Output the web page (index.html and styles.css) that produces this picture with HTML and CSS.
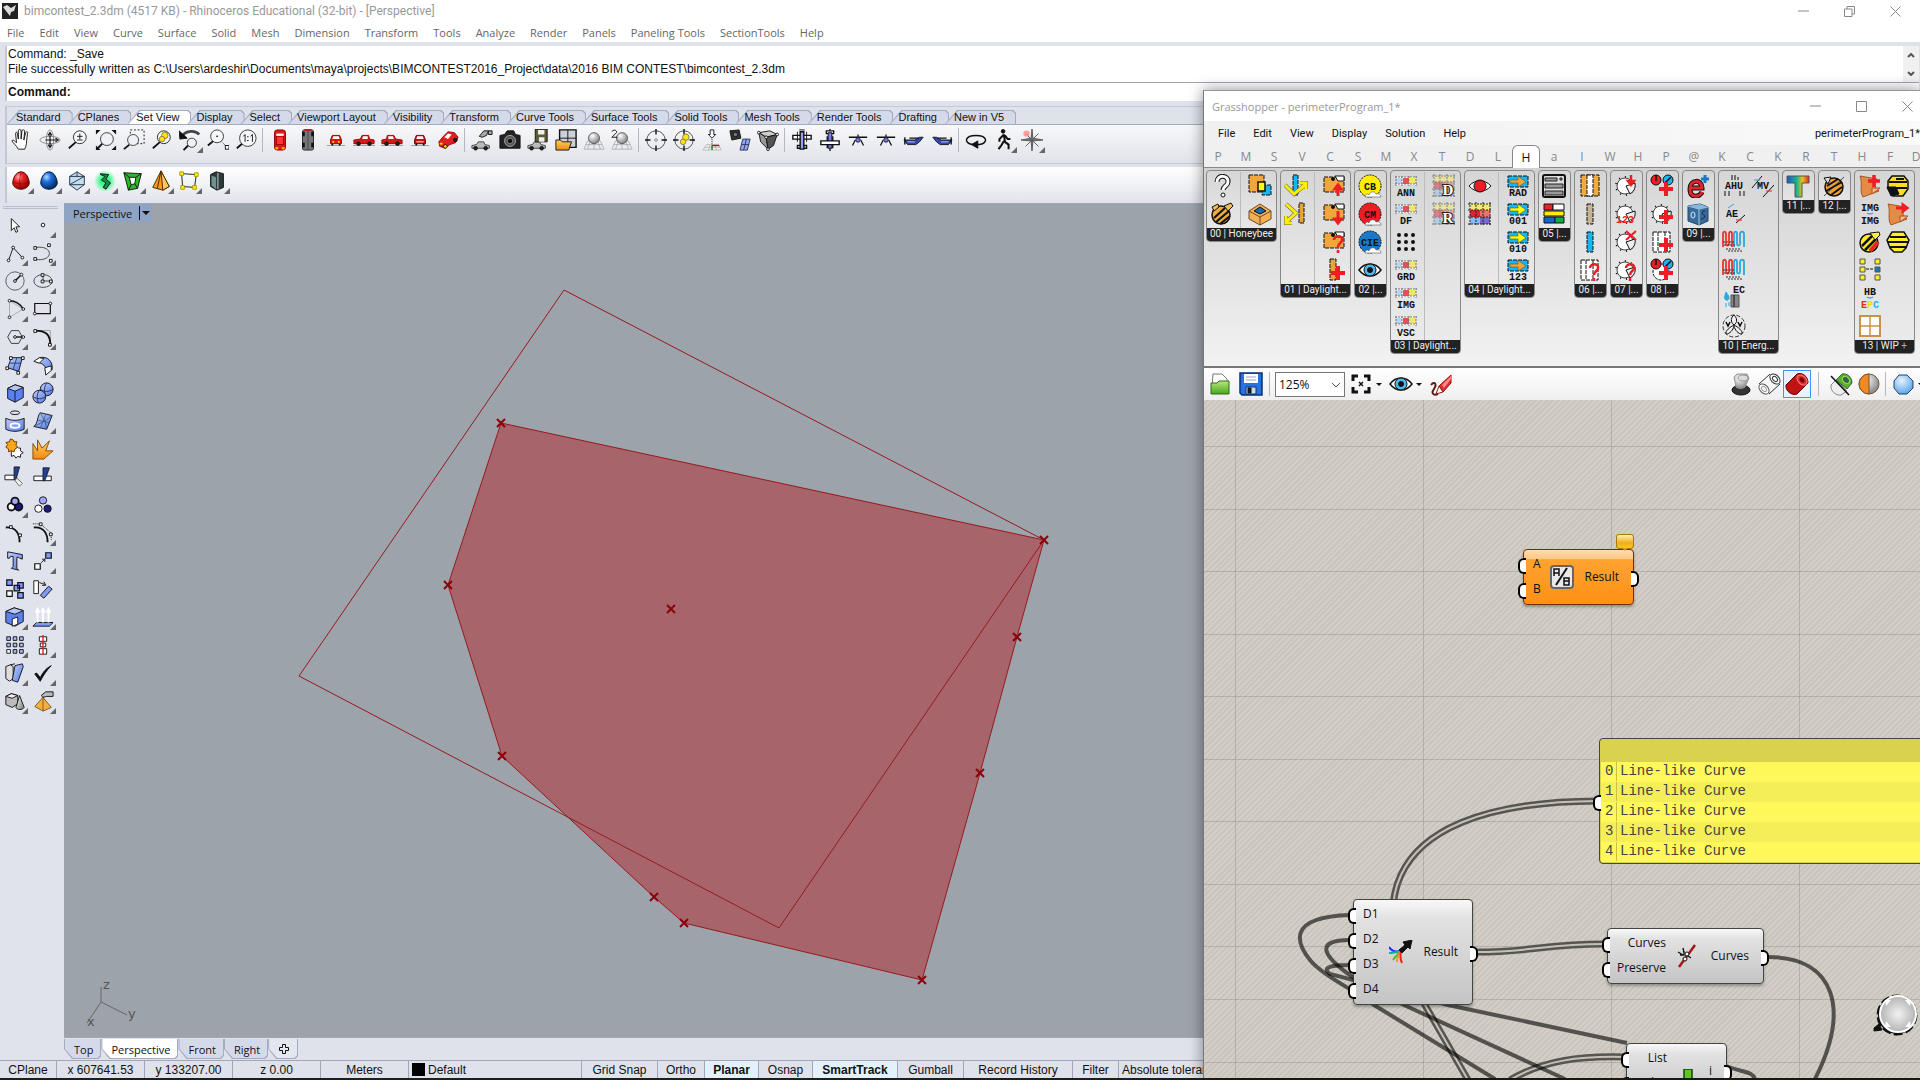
FILE: index.html
```html
<!DOCTYPE html>
<html lang="en">
<head>
<meta charset="UTF-8">
<meta name="viewport" content="width=device-width, initial-scale=1.0">
<title>bimcontest_2.3dm - Rhinoceros</title>
<link rel="stylesheet" href="styles.css">
</head>
<body>

<!-- icon library -->
<svg class="defs" aria-hidden="true">
<defs>
<linearGradient id="gBlue" x1="0" y1="0" x2="1" y2="1"><stop offset="0" stop-color="#c3d0ff"/><stop offset="1" stop-color="#5277ea"/></linearGradient>
<linearGradient id="gOrange" x1="0" y1="0" x2="0" y2="1"><stop offset="0" stop-color="#ffd060"/><stop offset="1" stop-color="#f08a10"/></linearGradient>
<linearGradient id="gGrey" x1="0" y1="0" x2="1" y2="1"><stop offset="0" stop-color="#fff"/><stop offset="1" stop-color="#777"/></linearGradient>
<linearGradient id="gGreen" x1="0" y1="0" x2="0" y2="1"><stop offset="0" stop-color="#b7e77d"/><stop offset="1" stop-color="#4aa51f"/></linearGradient>
<linearGradient id="gRain" x1="0" y1="0" x2="1" y2="0"><stop offset="0" stop-color="#1b56c8"/><stop offset=".45" stop-color="#19b58c"/><stop offset=".7" stop-color="#e8c21a"/><stop offset="1" stop-color="#e0281a"/></linearGradient>
<radialGradient id="bRed" cx=".35" cy=".3" r=".8"><stop offset="0" stop-color="#ffb0b0"/><stop offset=".35" stop-color="#ee2222"/><stop offset="1" stop-color="#700"/></radialGradient>
<radialGradient id="bBlue" cx=".35" cy=".3" r=".8"><stop offset="0" stop-color="#b0dcff"/><stop offset=".35" stop-color="#1f6fe0"/><stop offset="1" stop-color="#024"/></radialGradient>
<radialGradient id="bGrey" cx=".35" cy=".3" r=".8"><stop offset="0" stop-color="#fff"/><stop offset="1" stop-color="#777"/></radialGradient>
<radialGradient id="bSilver"><stop offset="0" stop-color="#f2f2f2"/><stop offset="1" stop-color="#b4b4b4"/></radialGradient>
<radialGradient id="bIce" cx=".4" cy=".3" r=".8"><stop offset="0" stop-color="#e6f4ff"/><stop offset="1" stop-color="#4a9be8"/></radialGradient>
<radialGradient id="glow"><stop offset=".4" stop-color="#3f8"/><stop offset="1" stop-color="#3f8" stop-opacity="0"/></radialGradient>

<symbol id="lens" viewBox="0 0 24 24"><path d="M10 14L2 21" stroke="#111" stroke-width="2"/><circle cx="14" cy="9" r="7" fill="#f6f7fa" stroke="#222"/></symbol>
<symbol id="hand" viewBox="0 0 24 24"><path d="M8 22C6 18 2 15 1 13c1-2 3 0 5 2L5 5c0-2 2-2 2 0l1 6V2c0-2 3-2 3 0v9l1-9c0-2 3-1 3 0l-1 10 2-8c1-2 3-1 2 1l-1 8c0 5-1 6-2 9z" fill="#fff"/></symbol>
<symbol id="orbit" viewBox="0 0 24 24"><ellipse cx="12" cy="12" rx="11" ry="4" stroke="#888"/><ellipse cx="12" cy="12" rx="4" ry="11" stroke="#888"/><path d="M12 6v12M7 12h12M10 7l2-3 2 3M10 17l2 3 2-3M18 10l3 2-3 2" stroke-width="1.3"/></symbol>
<symbol id="zoompm" viewBox="0 0 24 24"><use href="#lens"/><path d="M11 8h6M14 5v6M11 12h6"/></symbol>
<symbol id="zoomext" viewBox="0 0 24 24"><path d="M8 16l-5 5" stroke-width="2"/><circle cx="13" cy="11" r="7" fill="#eef1f5" stroke="#333"/><path d="M1 6V1h5zM23 6V1h-5zM1 18v5h5zM23 18v5h-5z" fill="#111" stroke="none"/></symbol>
<symbol id="zoomwin" viewBox="0 0 24 24"><path d="M8 1h15v15H8z" stroke-dasharray="2 2"/><path d="M7 17l-6 5" stroke-width="2"/><circle cx="11" cy="12" r="6" fill="#eef1f5" stroke="#444"/></symbol>
<symbol id="zoomsel" viewBox="0 0 24 24"><use href="#lens"/><circle cx="15" cy="7" r="3.500" fill="#ffe600" stroke="#875"/><circle cx="12" cy="11" r="3" fill="#ffe600" stroke="#875"/></symbol>
<symbol id="undoview" viewBox="0 0 24 24"><path d="M3 8C8 1 18 1 22 6" stroke="#444" stroke-width="3"/><path d="M0 2l1 9 8-1z" fill="#111"/><path d="M10 18l-5 5" stroke-width="2"/><circle cx="14" cy="15" r="5" fill="#eef1f5" stroke="#333"/></symbol>
<symbol id="zoomtgt" viewBox="0 0 24 24"><path d="M7 13l-6 5" stroke-width="2"/><circle cx="11" cy="8" r="7" fill="#f6f7fa" stroke="#333"/><circle cx="11" cy="8" r=".6"/><path d="M16 14l4 4" stroke-dasharray="1 1"/><rect x="20" y="18" width="4" height="4" fill="#fff"/></symbol>
<symbol id="zoom11" viewBox="0 0 24 24"><path d="M9 15l-7 6" stroke-width="2"/><circle cx="14" cy="10" r="9" fill="#f6f7fa" stroke="#333"/><path d="M9 8l2-2v8M17 8l2-2v8"/><path d="M14 8v1M14 12v1" stroke-width="1.500"/></symbol>
<symbol id="cartop" viewBox="0 0 24 24"><rect x="6" y="1" width="12" height="22" rx="3" fill="#e01818" stroke="#800"/><rect x="8" y="5" width="8" height="3" fill="#fff" stroke="none"/><rect x="8" y="8" width="8" height="9" fill="#f33" stroke="#900"/><path d="M7 21h3M14 21h3" stroke="#fc0" stroke-width="2"/></symbol>
<symbol id="carbot" viewBox="0 0 24 24"><rect x="6" y="1" width="12" height="22" rx="2" fill="#777" stroke="#222"/><path d="M12 2v20" stroke="#444"/><path d="M7 3v5M17 3v5M7 15v5M17 15v5" stroke="#111" stroke-width="3"/><path d="M8 1h8" stroke="#d11" stroke-width="2"/></symbol>
<symbol id="carfront" viewBox="0 0 24 24"><path d="M2 18h20" stroke="#999"/><path d="M8 7h8l2 5v4H6v-4z" fill="#d81818" stroke="#900"/><path d="M9 8h6l1 3H8z" fill="#fff" stroke="none"/><path d="M8 14h2M14 14h2" stroke="#fd0" stroke-width="2"/><path d="M7 17h2M15 17h2" stroke-width="2"/></symbol>
<symbol id="carleft" viewBox="0 0 24 24"><path d="M0 18h24" stroke="#999"/><path d="M1 12l7-1 2-4h7l1 4 5 1v4H1z" fill="#d81818" stroke="#900"/><path d="M11 8h5v3h-6z" fill="#fff" stroke="none"/><circle cx="6" cy="16" r="2" fill="#222"/><circle cx="18" cy="16" r="2" fill="#222"/></symbol>
<symbol id="carright" viewBox="0 0 24 24"><g transform="matrix(-1 0 0 1 24 0)"><use href="#carleft"/></g></symbol>
<symbol id="carback" viewBox="0 0 24 24"><path d="M2 18h20" stroke="#999"/><path d="M8 7h8l2 5v4H6v-4z" fill="#c81010" stroke="#700"/><path d="M9 8h6l1 3H8z" fill="#fff" stroke="none"/><path d="M8 14h8" stroke="#fff"/><path d="M7 17h2M15 17h2" stroke-width="2"/></symbol>
<symbol id="carpersp" viewBox="0 0 24 24"><path d="M2 14l5-6 5-5 7 1 4 5-3 6-6 2-5 4-6-2z" fill="#e02020" stroke="#900"/><path d="M8 9l4-4 4 1-4 5z" fill="#fff" stroke="none"/><circle cx="9" cy="19" r="2" fill="#fd0"/><circle cx="20" cy="12" r="2" fill="#222"/><path d="M3 16h3" stroke="#fd0" stroke-width="2"/></symbol>
<symbol id="cargrey" viewBox="0 0 24 24"><path d="M1 18l5-1 2-3h6l1 3 5 1v3H1z" fill="#bbb" stroke="#444"/><circle cx="5" cy="21" r="2" fill="#222"/><circle cx="16" cy="21" r="2" fill="#222"/></symbol>
<symbol id="carset" viewBox="0 0 24 24"><use href="#cargrey"/><path d="M9 8l5-6h5l-2 5-5 2zM19 2h4v4h-4z" fill="#aaa"/></symbol>
<symbol id="camera" viewBox="0 0 24 24"><path d="M1 7l5-1 3-4h7l2 4 5 1v14H1z" fill="#222"/><circle cx="12" cy="13" r="6" fill="#555" stroke="#aaa"/><circle cx="12" cy="13" r="3" fill="#111" stroke="#888"/></symbol>
<symbol id="carsave" viewBox="0 0 24 24"><use href="#cargrey"/><path d="M9 0h13v14H9z" fill="#5c5c38"/><path d="M12 1h7v5h-7zM13 9h6v5h-6z" fill="#eee" stroke="none"/></symbol>
<symbol id="openview" viewBox="0 0 24 24"><path d="M5 1h18v19H5z" fill="#ccd0da" stroke-width="1.500"/><path d="M14 1v14M5 10h18"/><path d="M1 12h5l2 2h10l-3 9H1z" fill="url(#gOrange)"/></symbol>
<symbol id="ball" viewBox="0 0 24 24"><path d="M5 13h14l4 9H1zM3 17h18M8 13l-3 9M16 13l3 9M12 13v9" stroke="#999" stroke-width=".7"/><circle cx="12" cy="10" r="6" fill="url(#bGrey)" stroke="#555"/></symbol>
<symbol id="ball2" viewBox="0 0 24 24"><use href="#ball"/><path d="M1 3c1-3 6-2 5 1L1 9h6"/></symbol>
<symbol id="target" viewBox="0 0 24 24"><circle cx="12" cy="12" r="10" stroke="#444"/><circle cx="12" cy="12" r="1.500" stroke="#888"/><path d="M12 0v6M12 18v6M0 12h6M18 12h6" stroke-width="1.500"/></symbol>
<symbol id="targety" viewBox="0 0 24 24"><use href="#target"/><circle cx="14" cy="9" r="3.500" fill="#ffe600" stroke="#875"/><circle cx="11" cy="14" r="3" fill="#ffe600" stroke="#875"/></symbol>
<symbol id="cplane" viewBox="0 0 24 24"><path d="M10 1h4v5h2l-4 4-4-4h2z" fill="#fff"/><path d="M12 11v8" stroke-dasharray="1 1"/><path d="M6 17h13l3 6H2zM4 20h17M10 17l-2 6M15 17l2 6" stroke="#aaa" stroke-width=".7"/><path d="M12 18h8" stroke="#d00" stroke-width="1.500"/><path d="M12 18v5" stroke="#080" stroke-width="1.500"/></symbol>
<symbol id="camplane" viewBox="0 0 24 24"><path d="M1 2l10-1 2 9-10 2z" fill="#333"/><circle cx="7" cy="6" r="2.500" fill="#777"/><path d="M15 11h8l-3 12h-8z" fill="#8ea8f8" stroke="#335"/><path d="M14 17h8M19 11l-3 12" stroke="#335"/></symbol>
<symbol id="boxedit" viewBox="0 0 24 24"><path d="M2 4l12-2 8 4-12 3z" fill="#ccc"/><path d="M2 4l8 5 2 13-8-8z" fill="#999"/><path d="M10 9l12-3-4 12-6 4z" fill="#555"/><g fill="#fff"><circle cx="2" cy="4" r="1.500"/><circle cx="10" cy="9" r="1.500"/><circle cx="22" cy="6" r="1.500"/><circle cx="12" cy="22" r="1.500"/></g></symbol>
<symbol id="planetop" viewBox="0 0 24 24"><path d="M2 7h20v4H2zM7 18h10v3H7z" fill="#fff" stroke-width="1.500"/><path d="M7 3v11M17 3v11M9 1h6"/><path d="M10 3h4v19h-4z" fill="#99f" stroke-width="1.500"/></symbol>
<symbol id="planebot" viewBox="0 0 24 24"><path d="M8 2h8v3H8z" fill="#fff" stroke-width="1.500"/><path d="M10 4h4v17h-4z" fill="#77e"/><path d="M2 13h20v4H2z" fill="#fff" stroke-width="1.500"/><path d="M12 0v2M9 8v5M15 8v5M9 17v4M15 17v4M12 21v3" stroke-width="1.500"/></symbol>
<symbol id="planefront" viewBox="0 0 24 24"><path d="M2 9h20M12 6v5M9 12l-3 6M15 12l3 6" stroke-width="1.400"/><circle cx="12" cy="12" r="2.500" fill="#77c" stroke="#225"/></symbol>
<symbol id="planeleft" viewBox="0 0 24 24"><path d="M1 12l4 5h9l4-3 4-5h-4l-5 3z" fill="#3446b0" stroke="#112"/><path d="M7 10h10M2 9v8" stroke-width="1.500"/><path d="M5 14h8" stroke="#cce"/></symbol>
<symbol id="planeright" viewBox="0 0 24 24"><g transform="matrix(-1 0 0 1 24 0)"><use href="#planeleft"/></g></symbol>
<symbol id="turn" viewBox="0 0 24 24"><path d="M8 17C-2 15 0 7 12 7s14 8 4 10h-4" stroke-width="1.600"/><path d="M14 13v8l-7-4z" fill="#111"/></symbol>
<symbol id="walk" viewBox="0 0 24 24"><circle cx="11" cy="2.500" r="2" fill="#111"/><path d="M12 6l-5 5v3M12 6l1 8 4 3v5M12 13l-3 5-3 4M13 7l3 4h3" stroke-width="2.200"/></symbol>
<symbol id="rose" viewBox="0 0 24 24"><path d="M12 0l1 10 11 2-11 1-1 11-1-11-11-1 11-2z" fill="#777" stroke="#555"/><path d="M5 5l14 14M19 5L5 19" stroke="#555"/><circle cx="6" cy="5" r="3.500" fill="#f88" fill-opacity=".8" stroke="none"/></symbol>

<symbol id="eggr" viewBox="0 0 24 24"><path d="M12 2c6 0 9 8 9 12s-4 7-9 7-9-3-9-7S6 2 12 2z" fill="url(#bRed)" stroke="#500"/><path d="M4 13c5 3 11 3 16 0M12 3c-2 6-2 12 0 18" stroke="#700" stroke-width=".6"/></symbol>
<symbol id="eggb" viewBox="0 0 24 24"><path d="M12 2c6 0 9 8 9 12s-4 7-9 7-9-3-9-7S6 2 12 2z" fill="url(#bBlue)" stroke="#013"/></symbol>
<symbol id="hexa" viewBox="0 0 24 24"><path d="M12 2l8 5v9l-8 6-8-6V7z" fill="#c6dcf0" stroke="#234"/><path d="M4 7h16L4 16h16M12 2v5" stroke="#234"/></symbol>
<symbol id="kang" viewBox="0 0 24 24"><circle cx="12" cy="12" r="12" fill="url(#glow)" stroke="none"/><path d="M7 4l9 1-3 5 5 4-5 7-3-2 3-5-5-3 4-4-5-2z" fill="#1a8a4a"/></symbol>
<symbol id="quadg" viewBox="0 0 24 24"><path d="M2 3l19 1-4 16-10 2z" fill="#2db52d"/><path d="M8 8h7l-1 7-4 1z" fill="#fff"/><path d="M2 3l6 5M21 4l-6 4M17 20l-3-5M7 22l3-6"/></symbol>
<symbol id="pyr" viewBox="0 0 24 24"><path d="M12 1l9 17-7 4-11-3z" fill="#f59a1b" stroke="#420"/><path d="M12 1L8 20" stroke="#420"/><path d="M12 1l2 21 7-4z" fill="#ffc860" stroke="#420"/></symbol>
<symbol id="quady" viewBox="0 0 24 24"><path d="M4 4l16 1-2 14-13-1z"/><g fill="#ffee00" stroke="#a90"><path d="M2 2h4v4H2zM18 3h4v4h-4zM16 17h4v4h-4zM3 17h4v4H3z"/></g></symbol>
<symbol id="prism" viewBox="0 0 24 24"><path d="M5 5l6-3 8 2v15l-7 3-7-4z" fill="#2a3a3a"/><path d="M6 6l5 2v13l-5-4z" fill="#6f9090" stroke="none"/><path d="M13 3v18" stroke="#cdd"/></symbol>

<symbol id="arrow" viewBox="0 0 24 24"><path d="M8 5v13l3-3 2 5 2-1-2-5h4z" fill="#fff"/></symbol>
<symbol id="point" viewBox="0 0 24 24"><circle cx="12" cy="12" r="2" fill="#fff"/></symbol>
<symbol id="pline" viewBox="0 0 24 24"><path d="M5 20L10 6l10 11"/><g fill="#fff"><circle cx="5" cy="20" r="1.500"/><circle cx="10" cy="6" r="1.500"/><circle cx="20" cy="17" r="1.500"/></g></symbol>
<symbol id="curve" viewBox="0 0 24 24"><path d="M4 6c20-3 20 16 0 13" stroke="#444"/><g fill="#fff"><path d="M2 5h3v3H2zM17 2h3v3h-3zM2 17h3v3H2zM19 19h3v3h-3z"/></g></symbol>
<symbol id="circle" viewBox="0 0 24 24"><circle cx="12" cy="12" r="10" stroke="#555"/><path d="M12 12l6-6" stroke-width="1.500"/><circle cx="12" cy="12" r="1.500" fill="#fff"/><circle cx="19" cy="5" r="1.500" fill="#fff"/></symbol>
<symbol id="ellipse" viewBox="0 0 24 24"><ellipse cx="12" cy="12" rx="10" ry="7" stroke="#444"/><path d="M12 12h9M12 12V5" stroke-width=".8"/><path d="M10 11h3v3h-3zM19 11h3v3h-3zM10 4h3v3h-3z" fill="#fff"/></symbol>
<symbol id="arc" viewBox="0 0 24 24"><path d="M6 21V3l15 9z" stroke="#aaa"/><path d="M6 3c7 0 12 4 15 9" stroke-width="1.500"/><g fill="#fff"><circle cx="6" cy="3" r="1.500"/><circle cx="6" cy="21" r="1.500"/><circle cx="21" cy="12" r="1.500"/></g></symbol>
<symbol id="rect" viewBox="0 0 24 24"><path d="M3 6h17v11H3z" stroke-width="1.300"/><g fill="#fff"><circle cx="3" cy="17" r="1.500"/><circle cx="20" cy="6" r="1.500"/></g></symbol>
<symbol id="poly" viewBox="0 0 24 24"><path d="M8 5h8l4 7-4 7H8l-4-7z" stroke="#333"/><path d="M12 12h8" stroke-width="1.500"/><circle cx="12" cy="12" r="1.500" fill="#fff"/><circle cx="21" cy="12" r="1.500" fill="#fff"/></symbol>
<symbol id="fillet" viewBox="0 0 24 24"><path d="M3 5h17v16" stroke="#999"/><path d="M3 5c12 0 17 4 17 16" stroke-width="2"/><path d="M2 4h3v3H2zM18 19h3v3h-3z" fill="#fff"/></symbol>
<symbol id="srf" viewBox="0 0 24 24"><path d="M8 4h12l-4 15-12-4z" fill="url(#gBlue)"/><path d="M14 4l-4 13M6 10h12" stroke="#246"/><path d="M6 3h3v3H6zM19 3h3v3h-3zM2 14h3v3H2zM14 19h3v3h-3z" fill="#fff"/></symbol>
<symbol id="loft" viewBox="0 0 24 24"><path d="M8 4c9-2 15 4 14 13l-7 3c1-7-3-10-10-11z" fill="url(#gBlue)"/><path d="M2 8l6-4 5 1-5 5zM14 15l7-2v5l-6 5z" fill="#fff"/></symbol>
<symbol id="cube" viewBox="0 0 24 24"><path d="M4 7l8-4 9 3v11l-9 5-8-4z" fill="#5b80f2"/><path d="M4 7l8-4 9 3-9 4z" fill="#b4c5ff"/><path d="M12 10v12"/></symbol>
<symbol id="spheres" viewBox="0 0 24 24"><circle cx="16" cy="8" r="7" fill="url(#gBlue)"/><circle cx="8" cy="16" r="7" fill="url(#gBlue)"/><path d="M16 1c-3 5-3 9-1 13M9 8c5 3 9 3 14 0M8 9c-3 5-3 9-1 14M1 16c5 3 9 3 14 0" stroke="#234"/></symbol>
<symbol id="extr" viewBox="0 0 24 24"><ellipse cx="12" cy="3" rx="5" ry="2"/><path d="M2 9c6 3 14 3 20 0v12c-6 3-14 3-20 0z" fill="url(#gBlue)"/><ellipse cx="12" cy="17" rx="5" ry="2.500" stroke="#fff" stroke-width="2"/></symbol>
<symbol id="mesh" viewBox="0 0 24 24"><path d="M9 3l13 3-6 15-14-3c5-4 3-10 7-15z" fill="url(#gBlue)"/><path d="M6 11l13 3M15 5L9 20M9 3l5 9M2 18l12-6M22 6l-8 6 2 9" stroke="#357" stroke-width=".8"/></symbol>
<symbol id="puzzle" viewBox="0 0 24 24"><path d="M10 11l3-2 3 2 2 0 0 3 3 2-3 2 0 3-3-1-2 2-2-3-3 1 0-4z" fill="#fff"/><path d="M2 5l4-1 1-3 3 1 1 2 3 0-1 4 2 2-3 2-1 3-3-1-3 1 0-3-3-2 2-3z" fill="#f9a61a" stroke="#630"/></symbol>
<symbol id="explode" viewBox="0 0 24 24"><path d="M1 23V6l5 8 0-12 5 9L19 3l-4 11 8 0-10 9z" fill="url(#gOrange)" stroke="#840"/></symbol>
<symbol id="trim" viewBox="0 0 24 24"><path d="M1 10h12v5H1z" fill="#fff"/><path d="M11 1h6l-4 14h-2z" fill="#24418f" stroke="#123"/><path d="M14 13l6 6-3 3-5-6z" fill="#eee" stroke="#666"/></symbol>
<symbol id="split" viewBox="0 0 24 24"><path d="M2 11h19v5H2z" fill="#fff"/><path d="M12 2h7l-5 14h-2z" fill="#24418f" stroke="#123"/></symbol>
<symbol id="group" viewBox="0 0 24 24"><g stroke-width="2"><circle cx="8" cy="14" r="4" fill="#fff"/><circle cx="16" cy="14" r="4" fill="#1b1b80"/><circle cx="12" cy="8" r="4" fill="#a0a8ff"/></g></symbol>
<symbol id="ungroup" viewBox="0 0 24 24"><circle cx="7" cy="16" r="4" fill="#fff"/><circle cx="17" cy="16" r="4" fill="#1b1b80"/><circle cx="12" cy="7" r="4" fill="#a0a8ff"/></symbol>
<symbol id="cpedit" viewBox="0 0 24 24"><path d="M2 6c12-1 15 8 15 16" stroke-width="2"/><path d="M6 4h3v3H6zM16 13h3v3h-3z" fill="#fff"/></symbol>
<symbol id="cpon" viewBox="0 0 24 24"><path d="M2 6c12-1 15 8 15 16" stroke-width="2"/><path d="M1 2h8l12 10v8" stroke-dasharray="1 1"/><path d="M8 1h3v3H8zM19 12h3v3h-3z" fill="#fff"/></symbol>
<symbol id="text" viewBox="0 0 24 24"><path d="M4 2l16 3v5l-3-1-1-1-2 0 0 12 2 2-8-2 2-2V7H7L6 9H4z" fill="url(#gBlue)"/></symbol>
<symbol id="move" viewBox="0 0 24 24"><path d="M3 15h6v6H3z" fill="#fff" stroke-width="1.300"/><path d="M15 3h6v6h-6z" fill="#7d9bff" stroke-width="1.300"/><path d="M10 14l4-4m-3 0h3v3"/></symbol>
<symbol id="copy" viewBox="0 0 24 24"><g fill="#7d9bff" stroke-width="1.300"><path d="M3 2h6v6H3zM15 5h6v6h-6zM11 8h6v6h-6zM15 16h6v6h-6z"/><path d="M3 14h6v6H3z" fill="#fff"/></g></symbol>
<symbol id="rotate" viewBox="0 0 24 24"><path d="M2 3h5v14H2z" fill="#fff"/><path d="M9 19l9-10 4 3-9 10z" fill="#7d9bff"/><path d="M8 5l6 2m-1-3l2 4-4 0"/></symbol>
<symbol id="boolean" viewBox="0 0 24 24"><path d="M2 6l9-4 10 3v12l-9 5-10-4z" fill="#5b80f2"/><path d="M2 6l9-4 10 3-9 4z" fill="#b4c5ff"/><path d="M9 14l6-2v8l-6 2z" fill="#fff"/></symbol>
<symbol id="project" viewBox="0 0 24 24"><path d="M5 18h18l-4 4H1z" fill="#7d9bff"/><path d="M6 18V5M12 18V5M18 18V5M4 7l2-4 2 4M10 7l2-4 2 4M16 7l2-4 2 4" stroke="#fff" stroke-width="2"/></symbol>
<symbol id="array" viewBox="0 0 24 24"><g fill="#a8b8ff"><path d="M3 3h4v4H3zM10 3h4v4h-4zM17 3h4v4h-4zM3 10h4v4H3zM10 10h4v4h-4zM17 10h4v4h-4zM10 17h4v4h-4zM17 17h4v4h-4z"/><path d="M3 17h4v4H3z" fill="#fff"/></g></symbol>
<symbol id="align" viewBox="0 0 24 24"><path d="M8 3h8v5H8zM9 10h6v4H9zM8 16h8v6H8z" fill="#fff"/><path d="M12 1v22" stroke="#d22" stroke-width="1.500"/></symbol>
<symbol id="flow" viewBox="0 0 24 24"><path d="M2 5l5-2 3 2v13l-4 3-4-3z" fill="#ddd"/><path d="M12 4l8-2 1 3-6 17-6-2z" fill="url(#gBlue)"/><path d="M7 3l5-1"/></symbol>
<symbol id="check" viewBox="0 0 24 24"><path d="M3 13l2-1 4 5C12 11 15 7 21 4 16 9 12 15 9 21z" fill="#111"/></symbol>
<symbol id="solids" viewBox="0 0 24 24"><path d="M2 7l6-3 7 2v9l-6 4-7-3z" fill="#bbb"/><path d="M2 7l6-3 7 2-6 3z" fill="#eee"/><path d="M17 6l5 13c-2 3-8 3-9 0z" fill="url(#gGrey)"/></symbol>
<symbol id="hist" viewBox="0 0 24 24"><path d="M12 8l9 11-9 4-9-5z" fill="#f5b042" stroke="#752"/><path d="M12 8v15" stroke="#752"/><path d="M10 6l5-4h8v5h-7l-4 1z" fill="#bbb"/></symbol>

<symbol id="quest" viewBox="0 0 24 24"><path d="M7 8C7 0 19 1 18 8c0 4-5 4-5 8" stroke="#111" stroke-width="5"/><path d="M7 8C7 0 19 1 18 8c0 4-5 4-5 8" stroke="#fff" stroke-width="3"/><circle cx="13" cy="21" r="2" fill="#fff"/></symbol>
<symbol id="bee" viewBox="0 0 24 24"><ellipse cx="11" cy="13" rx="9" ry="9" fill="#f0ab40" stroke-width="1.500"/><path d="M4 16L15 6M6 20L19 9M10 22L20 14" stroke-width="2.200"/><path d="M14 4l7-3 2 3-5 5zM2 5l6-3 1 3-5 4z" fill="#f3bb58"/></symbol>
<symbol id="zones" viewBox="0 0 24 24"><path d="M1 1h15v17H1z" fill="#f1a63c" stroke-dasharray="4 1"/><path d="M14 11h9v10h-9z" fill="#19b5f1" stroke-dasharray="4 1"/><path d="M10 8h7v9h-7z" fill="#ff0" stroke-width="1.500"/></symbol>
<symbol id="crate" viewBox="0 0 24 24"><path d="M1 9l11-7 11 7v8l-11 6-11-6z" fill="#f1b055" stroke="#742"/><path d="M1 9l11 6 11-6M12 15v8" stroke="#742"/><path d="M6 9l6-4 6 4-6 3z" fill="#1a6ab5"/></symbol>
<symbol id="pick1" viewBox="0 0 24 24"><path d="M9 1h5v20H9z" fill="#19b5f1" stroke-dasharray="4 1"/><path d="M1 11l9 9 11-9M16 9h6v6" stroke="#665" stroke-width="4"/><path d="M1 11l9 9 11-9M16 9h6v6" stroke="#fe0" stroke-width="3"/></symbol>
<symbol id="pick2" viewBox="0 0 24 24"><path d="M15 1h5v20h-5z" fill="#e8a33a" stroke-dasharray="4 1"/><path d="M2 2l10 9-10 9M2 14v7h6" stroke="#665" stroke-width="4"/><path d="M2 2l10 9-10 9M2 14v7h6" stroke="#fe0" stroke-width="3"/></symbol>
<symbol id="tag" viewBox="0 0 24 24"><path d="M2 3h20v15H2z" fill="#f1a63c" stroke-dasharray="4 1"/><path d="M13 2h9v5h-6z" fill="#fff"/><circle cx="11" cy="5" r="1.500" fill="#111"/></symbol>
<symbol id="tagup" viewBox="0 0 24 24"><use href="#tag"/><path d="M16 22v-9M13 15l3-4 3 4z" stroke="#ee1c24" stroke-width="3" fill="#ee1c24"/></symbol>
<symbol id="tagdn" viewBox="0 0 24 24"><use href="#tag"/><path d="M16 9v9M13 17l3 4 3-4z" stroke="#ee1c24" stroke-width="3" fill="#ee1c24"/></symbol>
<symbol id="redq" viewBox="0 0 24 24"><path d="M12 10c0-5 9-5 8 0 0 3-4 3-4 7M16 20v3" stroke="#ee1c24" stroke-width="2.500"/></symbol>
<symbol id="tagq" viewBox="0 0 24 24"><use href="#tag"/><use href="#redq"/></symbol>
<symbol id="redplus" viewBox="0 0 24 24"><path d="M16 8v14M9 15h14" stroke="#ee1c24" stroke-width="4"/></symbol>
<symbol id="postplus" viewBox="0 0 24 24"><path d="M8 1h6v21H8z" fill="#e8a33a" stroke-dasharray="4 1"/><use href="#redplus"/></symbol>
<symbol id="cloud" viewBox="0 0 24 24"><path d="M7 23c0-3 3-4 4-2 1-4 6-4 7-1 3-1 5 1 5 3z" fill="#fff" stroke="#555" stroke-width=".6"/></symbol>
<symbol id="eye" viewBox="0 0 24 24"><path d="M1 12c6-8 16-8 22 0-6 8-16 8-22 0z" fill="#fff" stroke-width="1.500"/><circle cx="12" cy="12" r="6" fill="#4db8f0"/><circle cx="12" cy="12" r="2.500" fill="#111"/></symbol>
<symbol id="redeye" viewBox="0 0 24 24"><path d="M1 12c6-7 16-7 22 0-6 7-16 7-22 0z" fill="#fff"/><circle cx="12" cy="12" r="6" fill="#ee1c24"/></symbol>
<symbol id="strip" viewBox="0 0 24 24"><path d="M2 3h20v8H2z" fill="#fff" stroke="none"/><path d="M2 4h6v6H2z" fill="#b8d4f0" stroke="none"/><path d="M9 4h6v6H9z" fill="#e34f5a" stroke="none"/><path d="M16 4h6v6h-6z" fill="#f2e66a" stroke="none"/><path d="M1 3h22M1 10h22M2 2v10M8 2v10M15 2v10M22 2v10" stroke="#777" stroke-dasharray="2 1"/></symbol>
<symbol id="dots" viewBox="0 0 24 24"><path d="M5 5h0M12 5h0M19 5h0M5 12h0M12 12h0M19 12h0M5 19h0M12 19h0M19 19h0" stroke-width="4" stroke-linecap="round"/></symbol>
<symbol id="grid" viewBox="0 0 24 24"><path d="M2 2h20v6H2z" fill="#f2ea6a" stroke="none"/><path d="M2 8h10v7H2z" fill="#e02030" stroke="none"/><path d="M12 8h10v7H12z" fill="#f07068" stroke="none"/><path d="M2 15h10v7H2z" fill="#8ab8f0" stroke="none"/><path d="M12 15h10v7H12z" fill="#7868c8" stroke="none"/><path d="M0 2h24M0 8h24M0 15h24M0 22h24M2 0v24M8 0v24M15 0v24M22 0v24" stroke="#222" stroke-dasharray="2 1"/></symbol>
<symbol id="flag" viewBox="0 0 24 24"><path d="M2 2h20v11H2z" fill="#19b5f1" stroke-dasharray="4 1"/></symbol>
<symbol id="flagy" viewBox="0 0 24 24"><use href="#flag"/><path d="M4 6h8V2l8 6-8 5V9H4z" fill="#ff0" stroke="#554" stroke-width=".6"/></symbol>
<symbol id="flago" viewBox="0 0 24 24"><use href="#flag"/><path d="M4 6h8V2l8 6-8 5V9H4z" fill="#f1a63c" stroke="#554" stroke-width=".6"/></symbol>
<symbol id="sched" viewBox="0 0 24 24"><rect x="1" y="1" width="22" height="22" rx="2" fill="#ddd" stroke-width="2"/><path d="M3 4h12v3H3zM3 10h18v4H3zM3 17h18v4H3z" fill="#999" stroke="#222"/><path d="M17 5h4M19 3v4"/></symbol>
<symbol id="cards" viewBox="0 0 24 24"><path d="M2 2h9v6H2z" fill="#e22"/><path d="M11 2h11v6H11z" fill="#fff"/><path d="M2 9h20v5H2z" fill="#fe0"/><path d="M2 15h11v6H2z" fill="#16c"/><path d="M13 15h9v6h-9z" fill="#1a4"/></symbol>
<symbol id="wall3" viewBox="0 0 24 24"><path d="M3 1h18v21H3z" fill="#f0ab40" stroke-dasharray="4 1"/><path d="M9 1h6v21H9z" fill="#fff" stroke-dasharray="4 1"/></symbol>
<symbol id="wall1" viewBox="0 0 24 24"><path d="M9 2h6v20H9z" fill="#c8b294" stroke-dasharray="4 1"/></symbol>
<symbol id="wallb" viewBox="0 0 24 24"><path d="M9 2h6v20H9z" fill="#19b5f1" stroke-dasharray="4 1"/></symbol>
<symbol id="wallw" viewBox="0 0 24 24"><path d="M3 2h17v20H3zM8 2v20M15 2v20" fill="#fff" stroke-dasharray="4 1"/></symbol>
<symbol id="wallq" viewBox="0 0 24 24"><use href="#wallw"/><use href="#redq"/></symbol>
<symbol id="wallp" viewBox="0 0 24 24"><use href="#wallw"/><use href="#redplus"/></symbol>
<symbol id="dial" viewBox="0 0 24 24"><circle cx="11" cy="12" r="9" stroke-width="2" stroke-dasharray="1 5"/><circle cx="11" cy="12" r="8" fill="#fff" stroke="#444"/><path d="M12 12l9-3c1 6-2 9-5 11z" fill="#eee"/></symbol>
<symbol id="dialdn" viewBox="0 0 24 24"><use href="#dial"/><path d="M17 1v7M14 7l3 4 3-4z" stroke="#ee1c24" stroke-width="2.500" fill="#ee1c24"/></symbol>
<symbol id="dialx" viewBox="0 0 24 24"><use href="#dial"/><path d="M12 1l10 9M22 1L12 10" stroke="#ee1c24" stroke-width="2"/></symbol>
<symbol id="dialq" viewBox="0 0 24 24"><use href="#dial"/><use href="#redq"/></symbol>
<symbol id="dialp" viewBox="0 0 24 24"><use href="#dial"/><use href="#redplus"/></symbol>
<symbol id="knobs" viewBox="0 0 24 24"><circle cx="6" cy="6" r="5" fill="#ee1c24"/><circle cx="18" cy="6" r="5" fill="#19b5f1"/><path d="M6 1v6M15 9l6-6" stroke-width="1.500"/><use href="#redplus"/></symbol>
<symbol id="knobd" viewBox="0 0 24 24"><circle cx="11" cy="14" r="8" fill="#fff" stroke-dasharray="3 1"/><use href="#knobs"/></symbol>
<symbol id="eplus" viewBox="0 0 24 24"><path d="M4 14h12c0-9-12-9-12 1s10 8 12 3" stroke="#111" stroke-width="5"/><path d="M4 14h12c0-9-12-9-12 1s10 8 12 3" stroke="#e8222a" stroke-width="3"/><path d="M19 1v8M15 5h8" stroke="#1a78c8" stroke-width="3"/></symbol>
<symbol id="openst" viewBox="0 0 24 24"><path d="M2 4l12-2 8 3v14l-9 4-11-4z" fill="#3a6a9a" stroke="#246"/><path d="M2 4l11 3v16M13 7l9-2" stroke="#9cd"/><path d="M2 4l12-2 8 3-9 2z" fill="#8ab8d8" stroke="none"/><ellipse cx="7" cy="13" rx="2" ry="3" stroke="#cef"/><path d="M19 9c-5 0-2 4-1 4 2 1 0 4-3 4" stroke="#124"/></symbol>
<symbol id="coil" viewBox="0 0 24 24"><path d="M1 17V4c0-3 3-3 3 0v10c0 2 3 2 3 0V4c0-3 3-3 3 0v13" stroke="#e33" stroke-width="1.800"/><path d="M12 17V4c0-3 3-3 3 0v10c0 2 3 2 3 0V4c0-3 4-3 4 0v13" stroke="#2aa8e0" stroke-width="1.800"/><path d="M1 12h12M2 15h11M4 19h14M6 21h15" stroke="#333" stroke-dasharray="2 1"/></symbol>
<symbol id="cooler" viewBox="0 0 24 24"><path d="M4 6c3 4 4 6 2 8-4 1-4-3-2-8zM4 17v4M7 16v4" fill="#2aa8e0" stroke="#2aa8e0"/><path d="M9 9h8v12H9z" fill="#888" stroke="#555"/><path d="M12 9v12"/></symbol>
<symbol id="fan" viewBox="0 0 24 24"><circle cx="12" cy="12" r="11" stroke="#333" stroke-dasharray="4 2"/><path d="M12 11C8 8 9 3 12 1c3 3 4 7 0 10 4 2 9 6 8 9-4 0-7-4-8-8-1 4-4 8-8 8-1-3 4-7 8-9z" fill="#eee"/><path d="M4 8l2 4 2-4M16 8l2 4 2-4" stroke-width="1.500"/></symbol>
<symbol id="therm" viewBox="0 0 24 24"><path d="M1 2h22v7h-7v14H9V9H1z" fill="url(#gRain)" stroke="#555"/></symbol>
<symbol id="bee2" viewBox="0 0 24 24"><circle cx="12" cy="13" r="9" fill="#f0a030" stroke-width="1.500"/><path d="M5 12l11-7M4 17L20 8M9 21l11-8" stroke-width="2"/><path d="M2 4l7-1-3 7z" fill="#ddd"/><path d="M22 3L2 22" stroke-width=".7"/></symbol>
<symbol id="scroll" viewBox="0 0 24 24"><path d="M2 2l17 3c-3 4-3 8 2 12l-16 6C1 17 5 9 2 2z" fill="#e38c46" stroke="#a52"/><path d="M14 14h8l-8 6z" fill="#f4bb88" stroke="#a52"/></symbol>
<symbol id="scrollp" viewBox="0 0 24 24"><use href="#scroll"/><path d="M16 1v12M10 7h12" stroke="#ee1c24" stroke-width="3.500"/></symbol>
<symbol id="scrolla" viewBox="0 0 24 24"><use href="#scroll"/><path d="M10 6h8M17 3l4 3-4 3z" stroke="#ee1c24" stroke-width="3" fill="#ee1c24"/></symbol>
<symbol id="hiveb" viewBox="0 0 24 24"><path d="M6 2h12l4 5v8l-5 7H7l-5-7V7z" fill="#fd2" stroke-width="1.500"/><path d="M3 8h18M3 14h18M10 5h8" stroke-width="2"/><path d="M1 13l9 0 3 7-8 2z" fill="#111"/></symbol>
<symbol id="hive" viewBox="0 0 24 24"><path d="M6 2h12l5 8-3 8-4 4H8l-4-4-3-8z" fill="#fe2" stroke-width="1.500"/><path d="M4 7h16M1 12h22M4 17h16" stroke-width="2"/></symbol>
<symbol id="beey" viewBox="0 0 24 24"><ellipse cx="11" cy="13" rx="9" ry="9" fill="#fe2" stroke-width="1.500"/><path d="M12 21L20 12" stroke="#e22" stroke-width="4"/><path d="M4 16L14 6M7 20L18 9" stroke-width="2.500"/><path d="M12 3l9-1 1 3-5 5z" fill="#fe4"/></symbol>
<symbol id="nodes" viewBox="0 0 24 24"><g fill="#fe2" stroke="#554"><path d="M2 1h5v5H2zM17 1h5v5h-5zM2 9h5v5H2zM2 17h5v5H2zM17 17h5v5h-5z"/><path d="M17 9h5v5h-5z" fill="#17c"/></g><path d="M8 11h8" stroke-dasharray="3 1"/></symbol>
<symbol id="window" viewBox="0 0 24 24"><path d="M2 2h20v20H2z" fill="#fff" stroke="#c8924a" stroke-width="2"/><path d="M12 2v20M2 12h20" stroke="#c8924a" stroke-width="1.500"/></symbol>

<symbol id="open" viewBox="0 0 24 24"><path d="M5 2h9l5 5v8H4z" fill="#fff" stroke="#777"/><path d="M3 11h6l2-2h10v13H3z" fill="url(#gGreen)" stroke="#2e6d12"/></symbol>
<symbol id="save" viewBox="0 0 24 24"><path d="M1 1h22v22H3l-2-2z" fill="#2872e0" stroke="#0b2f73" stroke-width="1.500"/><path d="M5 2h14v9H5z" fill="#fff" stroke="none"/><path d="M7 5h10M7 8h10" stroke="#9ab"/><path d="M7 15h10v7H7z" fill="#cdd" stroke="#0b2f73"/><path d="M9 16h3v5H9z" fill="#123"/></symbol>
<symbol id="focus" viewBox="0 0 24 24"><path d="M4 9V4h5M15 4h5v5M20 15v5h-5M9 20H4v-5" stroke-width="3"/><path d="M10 10l4 4M14 10l-4 4" stroke-width="1.500"/></symbol>
<symbol id="pencil" viewBox="0 0 24 24"><path d="M2 13c4-5 6 0 3 4s-1 7 4 5" stroke="#5a1c10" stroke-width="2"/><path d="M10 14L22 3v8l-8 9z" fill="#e0302a" stroke="#911"/><path d="M7 22l3-8 4 6z" fill="#fff" stroke="#911"/><path d="M13 13l9-9v3l-7 9z" fill="#f88" stroke="none"/></symbol>
<symbol id="cylhide" viewBox="0 0 24 24"><ellipse cx="12" cy="18" rx="9" ry="5" fill="#333"/><path d="M5 5l3-3 10 0 2 4-4 9c-3 2-6 2-9 0z" fill="url(#bGrey)" stroke="#999"/><ellipse cx="14" cy="6" rx="5" ry="3" fill="#ddd" stroke="#999"/></symbol>
<symbol id="cylwire" viewBox="0 0 24 24"><path d="M2 12L13 2M12 22L23 12" stroke="#333"/><ellipse cx="18" cy="7" rx="4" ry="6" transform="rotate(-45 18 7)" fill="#fff" stroke="#333"/><ellipse cx="18" cy="7" rx="2" ry="3" transform="rotate(-45 18 7)" stroke="#333"/><ellipse cx="7" cy="17" rx="4" ry="6" transform="rotate(-45 7 17)" fill="#fff" stroke="#555"/><ellipse cx="7" cy="17" rx="2" ry="3" transform="rotate(-45 7 17)" stroke="#999"/></symbol>
<symbol id="cylred" viewBox="0 0 24 24"><path d="M1 13L12 2c5-2 11 2 11 9L12 22C7 24 0 19 1 13z" fill="#c01414" stroke="#600"/><ellipse cx="17" cy="8" rx="4" ry="6" transform="rotate(-45 17 8)" fill="#e03030" stroke="#f77"/><ellipse cx="17" cy="8" rx="2" ry="3" transform="rotate(-45 17 8)" fill="#700" stroke="none"/></symbol>
<symbol id="cylgreen" viewBox="0 0 24 24"><path d="M2 13l5-5 11 11-6 4C7 24 1 19 2 13z" fill="#eee" stroke="#888"/><path d="M7 8l6-6c5-1 10 3 10 9l-5 6z" fill="#5cae22" stroke="#364"/><ellipse cx="17" cy="8" rx="3" ry="4" transform="rotate(-45 17 8)" fill="#364" stroke="#9d6"/><path d="M2 4l18 19" stroke-width="1.500"/></symbol>
<symbol id="halfball" viewBox="0 0 24 24"><circle cx="12" cy="12" r="10" fill="url(#bGrey)" stroke="#753"/><path d="M12 2a10 10 0 0 0 0 20z" fill="#f08a20" stroke="#753"/></symbol>
<symbol id="iceball" viewBox="0 0 24 24"><path d="M8 3h8l6 6v7l-6 6H8l-5-6V9z" fill="url(#bIce)" stroke="#246"/></symbol>
<symbol id="mark" viewBox="0 0 10 10" width="10" height="10"><path d="M1 1l8 8M9 1L1 9"/></symbol>
</defs>
</svg>

<div class="rhino">
    <header class="titlebar">
        <svg class="applogo" viewBox="0 0 16 16"><rect width="16" height="16" fill="#222" stroke="none"/><path d="M1 4l4-2 4 3 5-3-2 6-3 1-1 4-4-5z" fill="#ddd" stroke="none"/></svg>
        <span>bimcontest_2.3dm (4517 KB) - Rhinoceros Educational (32-bit) - [Perspective]</span>
        <div class="winbtns">
            <button aria-label="Minimize"><svg viewBox="0 0 11 11"><path d="M0 5h11"/></svg></button>
            <button aria-label="Restore"><svg viewBox="0 0 11 11"><path d="M.5 3h7.500v7.500H.5zM3 3V.5h7.500V8H8"/></svg></button>
            <button aria-label="Close"><svg viewBox="0 0 11 11"><path d="M.5.5l10 10M10.500.5l-10 10"/></svg></button>
        </div>
    </header>
    <nav class="menu">
        <a href="#">File</a><a href="#">Edit</a><a href="#">View</a><a href="#">Curve</a><a href="#">Surface</a><a href="#">Solid</a><a href="#">Mesh</a><a href="#">Dimension</a><a href="#">Transform</a><a href="#">Tools</a><a href="#">Analyze</a><a href="#">Render</a><a href="#">Panels</a><a href="#">Paneling Tools</a><a href="#">SectionTools</a><a href="#">Help</a>
    </nav>

    <section class="command">
        <div class="history">
            <p>Command: _Save<br>File successfully written as C:\Users\ardeshir\Documents\maya\projects\BIMCONTEST2016_Project\data\2016 BIM CONTEST\bimcontest_2.3dm</p>
            <div class="scroller">
                <svg viewBox="0 0 8 5"><path d="M1 4l3-3 3 3"/></svg>
                <svg viewBox="0 0 8 5"><path d="M1 1l3 3 3-3"/></svg>
            </div>
        </div>
        <div class="prompt"><label for="cmd">Command:</label><input id="cmd" type="text"></div>
    </section>

    <section class="toolpane">
        <div class="tabs">
            <button>Standard</button><button>CPlanes</button><button class="active">Set View</button><button>Display</button><button>Select</button><button>Viewport Layout</button><button>Visibility</button><button>Transform</button><button>Curve Tools</button><button>Surface Tools</button><button>Solid Tools</button><button>Mesh Tools</button><button>Render Tools</button><button>Drafting</button><button>New in V5</button>
        </div>
        <div class="toolbar">
            <button class="tool" aria-label="Pan"><svg><use href="#hand"/></svg></button>
            <button class="tool" aria-label="Rotate view"><svg><use href="#orbit"/></svg></button>
            <button class="tool" aria-label="Zoom dynamic"><svg><use href="#zoompm"/></svg></button>
            <button class="tool" aria-label="Zoom extents"><svg><use href="#zoomext"/></svg></button>
            <button class="tool" aria-label="Zoom window"><svg><use href="#zoomwin"/></svg></button>
            <button class="tool" aria-label="Zoom selected"><svg><use href="#zoomsel"/></svg></button>
            <button class="tool fly" aria-label="Undo view"><svg><use href="#undoview"/></svg></button>
            <button class="tool" aria-label="Zoom target"><svg><use href="#zoomtgt"/></svg></button>
            <button class="tool" aria-label="Zoom 1:1"><svg><use href="#zoom11"/></svg></button>
            <i class="sep"></i>
            <button class="tool" aria-label="Top"><svg><use href="#cartop"/></svg></button>
            <button class="tool" aria-label="Bottom"><svg><use href="#carbot"/></svg></button>
            <button class="tool" aria-label="Front"><svg><use href="#carfront"/></svg></button>
            <button class="tool" aria-label="Right"><svg><use href="#carleft"/></svg></button>
            <button class="tool" aria-label="Left"><svg><use href="#carright"/></svg></button>
            <button class="tool" aria-label="Back"><svg><use href="#carback"/></svg></button>
            <button class="tool" aria-label="Perspective"><svg><use href="#carpersp"/></svg></button>
            <i class="sep"></i>
            <button class="tool" aria-label="Set view"><svg><use href="#carset"/></svg></button>
            <button class="tool" aria-label="Camera"><svg><use href="#camera"/></svg></button>
            <button class="tool" aria-label="Save view"><svg><use href="#carsave"/></svg></button>
            <button class="tool" aria-label="Read views"><svg><use href="#openview"/></svg></button>
            <button class="tool" aria-label="Plan view"><svg><use href="#ball"/></svg></button>
            <button class="tool" aria-label="Two point view"><svg><use href="#ball2"/></svg></button>
            <i class="sep"></i>
            <button class="tool" aria-label="Target"><svg><use href="#target"/></svg></button>
            <button class="tool" aria-label="Target selected"><svg><use href="#targety"/></svg></button>
            <button class="tool" aria-label="CPlane view"><svg><use href="#cplane"/></svg></button>
            <button class="tool" aria-label="Match photo"><svg><use href="#camplane"/></svg></button>
            <button class="tool" aria-label="Perspective match"><svg><use href="#boxedit"/></svg></button>
            <i class="sep"></i>
            <button class="tool" aria-label="Plane top"><svg><use href="#planetop"/></svg></button>
            <button class="tool" aria-label="Plane bottom"><svg><use href="#planebot"/></svg></button>
            <button class="tool" aria-label="Plane front"><svg><use href="#planefront"/></svg></button>
            <button class="tool" aria-label="Plane back"><svg><use href="#planefront"/></svg></button>
            <button class="tool" aria-label="Plane left"><svg><use href="#planeleft"/></svg></button>
            <button class="tool" aria-label="Plane right"><svg><use href="#planeright"/></svg></button>
            <i class="sep"></i>
            <button class="tool" aria-label="Turntable"><svg><use href="#turn"/></svg></button>
            <button class="tool fly" aria-label="Walk about"><svg><use href="#walk"/></svg></button>
            <button class="tool fly" aria-label="Named positions"><svg><use href="#rose"/></svg></button>
        </div>
    </section>
    <section class="toolbar second">
        <button class="tool fly" aria-label="Egg red"><svg><use href="#eggr"/></svg></button>
        <button class="tool fly" aria-label="Egg blue"><svg><use href="#eggb"/></svg></button>
        <button class="tool fly" aria-label="Hexagon"><svg><use href="#hexa"/></svg></button>
        <button class="tool fly" aria-label="Kangaroo"><svg><use href="#kang"/></svg></button>
        <button class="tool fly" aria-label="Panel frame"><svg><use href="#quadg"/></svg></button>
        <button class="tool fly" aria-label="Pyramid"><svg><use href="#pyr"/></svg></button>
        <button class="tool fly" aria-label="Grid points"><svg><use href="#quady"/></svg></button>
        <button class="tool fly" aria-label="Section prism"><svg><use href="#prism"/></svg></button>
    </section>

    <main class="work">
        <aside class="sidebar">
            <button class="tool" aria-label="Select"><svg><use href="#arrow"/></svg></button>
            <button class="tool fly" aria-label="Point"><svg><use href="#point"/></svg></button>
            <button class="tool fly" aria-label="Polyline"><svg><use href="#pline"/></svg></button>
            <button class="tool fly" aria-label="Curve"><svg><use href="#curve"/></svg></button>
            <button class="tool fly" aria-label="Circle"><svg><use href="#circle"/></svg></button>
            <button class="tool fly" aria-label="Ellipse"><svg><use href="#ellipse"/></svg></button>
            <button class="tool fly" aria-label="Arc"><svg><use href="#arc"/></svg></button>
            <button class="tool fly" aria-label="Rectangle"><svg><use href="#rect"/></svg></button>
            <button class="tool fly" aria-label="Polygon"><svg><use href="#poly"/></svg></button>
            <button class="tool fly" aria-label="Fillet"><svg><use href="#fillet"/></svg></button>
            <button class="tool fly" aria-label="Surface"><svg><use href="#srf"/></svg></button>
            <button class="tool fly" aria-label="Loft"><svg><use href="#loft"/></svg></button>
            <button class="tool fly" aria-label="Box"><svg><use href="#cube"/></svg></button>
            <button class="tool fly" aria-label="Boolean union"><svg><use href="#spheres"/></svg></button>
            <button class="tool fly" aria-label="Extrude"><svg><use href="#extr"/></svg></button>
            <button class="tool fly" aria-label="Mesh"><svg><use href="#mesh"/></svg></button>
            <button class="tool" aria-label="Join"><svg><use href="#puzzle"/></svg></button>
            <button class="tool" aria-label="Explode"><svg><use href="#explode"/></svg></button>
            <button class="tool" aria-label="Trim"><svg><use href="#trim"/></svg></button>
            <button class="tool" aria-label="Split"><svg><use href="#split"/></svg></button>
            <button class="tool fly" aria-label="Group"><svg><use href="#group"/></svg></button>
            <button class="tool" aria-label="Ungroup"><svg><use href="#ungroup"/></svg></button>
            <button class="tool" aria-label="Edit points"><svg><use href="#cpedit"/></svg></button>
            <button class="tool fly" aria-label="Control points"><svg><use href="#cpon"/></svg></button>
            <button class="tool" aria-label="Text"><svg><use href="#text"/></svg></button>
            <button class="tool fly" aria-label="Move"><svg><use href="#move"/></svg></button>
            <button class="tool" aria-label="Copy"><svg><use href="#copy"/></svg></button>
            <button class="tool" aria-label="Rotate"><svg><use href="#rotate"/></svg></button>
            <button class="tool fly" aria-label="Boolean"><svg><use href="#boolean"/></svg></button>
            <button class="tool fly" aria-label="Project"><svg><use href="#project"/></svg></button>
            <button class="tool fly" aria-label="Array"><svg><use href="#array"/></svg></button>
            <button class="tool fly" aria-label="Align"><svg><use href="#align"/></svg></button>
            <button class="tool fly" aria-label="Flow"><svg><use href="#flow"/></svg></button>
            <button class="tool fly" aria-label="Check"><svg><use href="#check"/></svg></button>
            <button class="tool fly" aria-label="Solids"><svg><use href="#solids"/></svg></button>
            <button class="tool fly" aria-label="History"><svg><use href="#hist"/></svg></button>
        </aside>
        <div class="viewcol">
            <div class="viewport">
                <button class="vplabel"><span>Perspective</span><i></i></button>
                <svg class="scene">
                    <polygon class="srf" points="437,219 980,336 953,433 916,569 858,776 620,719 590,693 438,552 384,381"/>
                    <polygon class="frame" points="500,86 980,336 715,724 235,472"/>
                    <g class="pts">
                        <use href="#mark" x="432" y="214"/><use href="#mark" x="975" y="331"/><use href="#mark" x="948" y="428"/><use href="#mark" x="911" y="564"/><use href="#mark" x="853" y="771"/><use href="#mark" x="615" y="714"/><use href="#mark" x="585" y="688"/><use href="#mark" x="433" y="547"/><use href="#mark" x="379" y="376"/><use href="#mark" x="602" y="400"/>
                    </g>
                    <g class="axes">
                        <path d="M37 783v15l26 13M37 798L23 819"/>
                        <text x="39" y="785">z</text><text x="64" y="814">y</text><text x="23" y="822">x</text>
                    </g>
                </svg>
            </div>
            <div class="vptabs">
                <button>Top</button><button class="active">Perspective</button><button>Front</button><button>Right</button><button class="add" aria-label="New viewport"><svg viewBox="0 0 10 10"><path d="M3.500.5h3v3h3v3h-3v3h-3v-3h-3v-3h3z"/></svg></button>
            </div>
        </div>
    </main>

    <footer class="status">
        <button class="w56">CPlane</button>
        <span class="w88">x 607641.53</span>
        <span class="w88">y 133207.00</span>
        <span class="w88">z 0.00</span>
        <span class="w88">Meters</span>
        <button class="layer"><i></i>Default</button>
        <button class="w76">Grid Snap</button>
        <button class="w47">Ortho</button>
        <button class="w54 on">Planar</button>
        <button class="w54">Osnap</button>
        <button class="w85 on">SmartTrack</button>
        <button class="w66">Gumball</button>
        <button class="w109">Record History</button>
        <button class="w46">Filter</button>
        <span class="tol">Absolute tolerance: 0.01</span>
    </footer>
    <div class="taskbar"></div>
</div>

<div class="gh">
    <header class="gh-title">
        <span>Grasshopper - perimeterProgram_1*</span>
        <div class="winbtns">
            <button aria-label="Minimize"><svg viewBox="0 0 11 11"><path d="M0 5h11"/></svg></button>
            <button aria-label="Maximize"><svg viewBox="0 0 11 11"><path d="M.5.5h10v10H.5z"/></svg></button>
            <button aria-label="Close"><svg viewBox="0 0 11 11"><path d="M.5.5l10 10M10.500.5l-10 10"/></svg></button>
        </div>
    </header>
    <nav class="gh-menu">
        <a href="#">File</a><a href="#">Edit</a><a href="#">View</a><a href="#">Display</a><a href="#">Solution</a><a href="#">Help</a>
        <span>perimeterProgram_1*</span>
    </nav>
    <div class="gh-tabs">
        <button>P</button><button>M</button><button>S</button><button>V</button><button>C</button><button>S</button><button>M</button><button>X</button><button>T</button><button>D</button><button>L</button><button class="active">H</button><button>a</button><button>I</button><button>W</button><button>H</button><button>P</button><button>@</button><button>K</button><button>C</button><button>K</button><button>R</button><button>T</button><button>H</button><button>F</button><button>D</button>
    </div>
    <div class="ribbon">
        <section class="panel">
            <div class="cols split">
                <div><svg><use href="#quest"/></svg><svg><use href="#bee"/></svg></div>
                <div><svg><use href="#zones"/></svg><svg><use href="#crate"/></svg></div>
            </div>
            <h3>00 | Honeybee</h3>
        </section>
        <section class="panel">
            <div class="cols split">
                <div><svg><use href="#pick1"/></svg><svg><use href="#pick2"/></svg></div>
                <div><svg><use href="#tagup"/></svg><svg><use href="#tagdn"/></svg><svg><use href="#tagq"/></svg><svg><use href="#postplus"/></svg></div>
            </div>
            <h3>01 | Daylight...</h3>
        </section>
        <section class="panel">
            <div class="cols">
                <div>
                    <svg viewBox="0 0 24 24"><circle cx="12" cy="12" r="11" fill="#fe0" stroke-dasharray="2 1"/><text class="cap" x="12" y="16">CB</text><use href="#cloud"/></svg>
                    <svg viewBox="0 0 24 24"><circle cx="12" cy="12" r="11" fill="#ee1c24" stroke-dasharray="2 1"/><text class="cap" x="12" y="16">CM</text><use href="#cloud"/></svg>
                    <svg viewBox="0 0 24 24"><circle cx="12" cy="12" r="11" fill="#1a78c8" stroke-dasharray="2 1"/><text class="cap" x="12" y="16">CIE</text><use href="#cloud"/></svg>
                    <svg><use href="#eye"/></svg>
                </div>
            </div>
            <h3>02 |...</h3>
        </section>
        <section class="panel">
            <div class="cols split">
                <div>
                    <svg viewBox="0 0 24 24"><use href="#strip"/><text class="cap" x="12" y="22">ANN</text></svg>
                    <svg viewBox="0 0 24 24"><use href="#strip"/><text class="cap" x="12" y="22">DF</text></svg>
                    <svg><use href="#dots"/></svg>
                    <svg viewBox="0 0 24 24"><use href="#strip"/><text class="cap" x="12" y="22">GRD</text></svg>
                    <svg viewBox="0 0 24 24"><use href="#strip"/><text class="cap" x="12" y="22">IMG</text></svg>
                    <svg viewBox="0 0 24 24"><use href="#strip"/><text class="cap" x="12" y="22">VSC</text></svg>
                </div>
                <div>
                    <svg viewBox="0 0 24 24"><g opacity=".5"><use href="#grid"/></g><text class="big" x="16" y="21">D</text></svg>
                    <svg viewBox="0 0 24 24"><g opacity=".5"><use href="#grid"/></g><text class="big" x="16" y="21">R</text></svg>
                </div>
            </div>
            <h3>03 | Daylight...</h3>
        </section>
        <section class="panel">
            <div class="cols split">
                <div><svg><use href="#redeye"/></svg><svg><use href="#grid"/></svg></div>
                <div>
                    <svg viewBox="0 0 24 24"><use href="#flago"/><text class="cap" x="12" y="22">RAD</text></svg>
                    <svg viewBox="0 0 24 24"><use href="#flagy"/><text class="cap" x="12" y="22">001</text></svg>
                    <svg viewBox="0 0 24 24"><use href="#flagy"/><text class="cap" x="12" y="22">010</text></svg>
                    <svg viewBox="0 0 24 24"><use href="#flago"/><text class="cap" x="12" y="22">123</text></svg>
                </div>
            </div>
            <h3>04 | Daylight...</h3>
        </section>
        <section class="panel">
            <div class="cols"><div><svg><use href="#sched"/></svg><svg><use href="#cards"/></svg></div></div>
            <h3>05 |...</h3>
        </section>
        <section class="panel">
            <div class="cols"><div><svg><use href="#wall3"/></svg><svg><use href="#wall1"/></svg><svg><use href="#wallb"/></svg><svg><use href="#wallq"/></svg></div></div>
            <h3>06 |...</h3>
        </section>
        <section class="panel">
            <div class="cols"><div><svg><use href="#dialdn"/></svg><svg viewBox="0 0 24 24"><use href="#dial"/><text class="cap red" x="11" y="21">123</text></svg><svg><use href="#dialx"/></svg><svg><use href="#dialq"/></svg></div></div>
            <h3>07 |...</h3>
        </section>
        <section class="panel">
            <div class="cols"><div><svg><use href="#knobs"/></svg><svg><use href="#dialp"/></svg><svg><use href="#wallp"/></svg><svg><use href="#knobd"/></svg></div></div>
            <h3>08 |...</h3>
        </section>
        <section class="panel">
            <div class="cols"><div><svg><use href="#eplus"/></svg><svg><use href="#openst"/></svg></div></div>
            <h3>09 |...</h3>
        </section>
        <section class="panel">
            <div class="cols">
                <div>
                    <svg viewBox="0 0 24 24"><path d="M10 1v5M13 1v5M16 3v3M3 17v5M7 17v5M18 17v5M22 17v5"/><text class="cap" x="12" y="15">AHU</text></svg>
                    <svg viewBox="0 0 24 24"><path d="M6 6l6-4" stroke="#2aa8e0"/><path d="M14 21l9-8"/><path d="M14 18h6" stroke="#e22"/><text class="cap" x="10" y="15">AE</text></svg>
                    <svg><use href="#coil"/></svg>
                    <svg><use href="#coil"/></svg>
                    <svg viewBox="0 0 24 24"><use href="#cooler"/><text class="cap" x="17" y="7">EC</text></svg>
                    <svg><use href="#fan"/></svg>
                </div>
                <div><svg viewBox="0 0 24 24"><path d="M2 14L12 2M13 23L24 11"/><path d="M4 6h6" stroke="#2aa8e0"/><path d="M16 17h6" stroke="#e22"/><text class="cap" x="13" y="15">MV</text></svg></div>
            </div>
            <h3>10 | Energ...</h3>
        </section>
        <section class="panel">
            <div class="cols"><div><svg><use href="#therm"/></svg></div></div>
            <h3>11 |...</h3>
        </section>
        <section class="panel">
            <div class="cols"><div><svg><use href="#bee2"/></svg></div></div>
            <h3>12 |...</h3>
        </section>
        <section class="panel">
            <div class="cols">
                <div>
                    <svg><use href="#scrollp"/></svg>
                    <svg viewBox="0 0 24 24"><text class="cap" x="12" y="9">IMG</text><path d="M9 11q3 2 6 0" stroke="#2aa8e0" stroke-width="1.500"/><text class="cap" x="12" y="22">IMG</text></svg>
                    <svg><use href="#beey"/></svg>
                    <svg><use href="#nodes"/></svg>
                    <svg viewBox="0 0 24 24"><text class="cap" x="12" y="9">HB</text><path d="M9 11q3 2 6 0" stroke="#2aa8e0" stroke-width="1.500"/><text class="cap" x="12" y="22"><tspan fill="#e22">E</tspan><tspan fill="#ed0">P</tspan><tspan fill="#19b5f1">C</tspan></text></svg>
                    <svg><use href="#window"/></svg>
                </div>
                <div><svg><use href="#hiveb"/></svg><svg><use href="#scrolla"/></svg><svg><use href="#hive"/></svg></div>
            </div>
            <h3>13 | WIP <span>+</span></h3>
        </section>
    </div>

    <div class="gh-bar">
        <button class="tool" aria-label="Open"><svg><use href="#open"/></svg></button>
        <button class="tool" aria-label="Save"><svg><use href="#save"/></svg></button>
        <i class="sep"></i>
        <div class="zoombox">
            <select aria-label="Zoom level"><option>125%</option><option>100%</option></select>
            <svg viewBox="0 0 8 5"><path d="M0 0l4 4 4-4"/></svg>
        </div>
        <button class="tool drop" aria-label="Zoom extents"><svg><use href="#focus"/></svg></button>
        <button class="tool drop" aria-label="Named views"><svg><use href="#eye"/></svg></button>
        <button class="tool" aria-label="Sketch"><svg><use href="#pencil"/></svg></button>
        <div class="right">
            <button class="tool" aria-label="No preview"><svg><use href="#cylhide"/></svg></button>
            <button class="tool" aria-label="Wireframe preview"><svg><use href="#cylwire"/></svg></button>
            <button class="tool picked" aria-label="Shaded preview"><svg><use href="#cylred"/></svg></button>
            <i class="sep"></i>
            <button class="tool" aria-label="Selected preview"><svg><use href="#cylgreen"/></svg></button>
            <button class="tool" aria-label="Document preview"><svg><use href="#halfball"/></svg></button>
            <i class="sep"></i>
            <button class="tool drop" aria-label="Mesh quality"><svg><use href="#iceball"/></svg></button>
        </div>
    </div>

    <div class="canvas">
        <svg class="wires">
            <g class="double">
                <path id="w1" d="M264 680L221 605C170 530 150 402 394 401"/>
                <path id="w2" d="M272 552C330 552 340 544 400 544"/>
                <path id="w3" d="M306 680C340 660 376 656 420 657"/>
            </g>
            <g class="light"><use href="#w1"/><use href="#w2"/><use href="#w3"/></g>
            <g class="single">
                <path d="M146 515C80 517 94 545 106 560S150 590 170 605L291 679"/>
                <path d="M146 540C110 540 118 556 150 578L200 605L361 679"/>
                <path d="M146 565C125 565 118 568 126 574L244 605L423 643"/>
                <path d="M564 557C632 557 646 610 611 679"/>
                <path d="M522 666C540 673 548 671 551 679"/>
            </g>
        </svg>

        <div class="node ratio">
            <div class="ins"><span>A</span><span>B</span></div>
            <svg viewBox="0 0 24 24"><rect x="1" y="1" width="22" height="22" rx="3" fill="#e8e8e8" stroke="#666" stroke-width="2"/><path d="M6 20L17 3" stroke-width="2"/><path d="M4 11V4h5v7M4 8h5M14 13h5v7h-5zM14 16h5" stroke-width="1.500"/></svg>
            <div class="outs"><span>Result</span></div>
            <i class="balloon"></i>
        </div>

        <div class="ghpanel">
            <ol start="0">
                <li><b>0</b>Line-like Curve</li>
                <li><b>1</b>Line-like Curve</li>
                <li><b>2</b>Line-like Curve</li>
                <li><b>3</b>Line-like Curve</li>
                <li><b>4</b>Line-like Curve</li>
            </ol>
        </div>

        <div class="node merge">
            <div class="ins"><span>D1</span><span>D2</span><span>D3</span><span>D4</span></div>
            <svg viewBox="0 0 24 24"><path d="M0 7c3 5 7 5 12 4" stroke="#22e" stroke-width="2"/><path d="M0 13c4 0 8-1 12-2" stroke="#1aa" stroke-width="2"/><path d="M4 20c2-3 5-6 8-9" stroke="#5b2" stroke-width="2"/><path d="M8 22c0-4 1-7 4-11" stroke="#e92" stroke-width="2"/><path d="M13 23c-2-4-2-7-1-12" stroke="#e22" stroke-width="2"/><path d="M10 10l6-5-2-3 9-2-2 9-2-2-6 6z" fill="#111"/></svg>
            <div class="outs"><span>Result</span></div>
        </div>

        <div class="node join">
            <div class="ins"><span>Curves</span><span>Preserve</span></div>
            <svg viewBox="0 0 24 24"><path d="M4 23L20 1" stroke="#a01818" stroke-width="2.500"/><path d="M3 8l5 3M8 4l1 5M5 11h4v-4M16 14l-3-2" stroke-width="1.300"/><circle cx="12" cy="10" r="2" fill="#fff"/><circle cx="10" cy="15" r="2" fill="#fff"/></svg>
            <div class="outs"><span>Curves</span></div>
        </div>

        <div class="node list">
            <div class="ins"><span>List</span><span>Index</span></div>
            <svg viewBox="0 0 24 24"><path d="M8 0h8v24H8z" fill="#5fc81e" stroke="#141" stroke-width="1.500"/></svg>
            <div class="outs"><span>i</span></div>
        </div>

        <svg class="compass" viewBox="0 0 46 46"><circle cx="24" cy="24" r="19" fill="#111" stroke="#111" stroke-width="3" stroke-dasharray="9 3"/><path d="M1 37l5-4 3 6-8 1z" fill="#111"/><circle cx="25" cy="23" r="18" fill="url(#bSilver)" stroke="#fff" stroke-width="2"/><path d="M12 9l6 0-5 6zM38 9l-6 0 5 6zM12 36l6 0-5-6zM38 36l-6 0 5-6z" fill="#fff" stroke="none"/></svg>
    </div>
</div>

</body>
</html>
```
FILE: styles.css
```css
* {
    box-sizing: border-box;
}
body {
    margin: 0;
    height: 100vh;
    overflow: hidden;
    position: relative;
    background: #dfe2ea;
    font-family: "Liberation Sans", Arial, sans-serif;
    font-size: 12px;
    color: #111;
}
button, input, select {
    font: inherit;
    color: inherit;
    border: none;
    background: none;
    padding: 0;
    margin: 0;
}
a {
    color: inherit;
    text-decoration: none;
}
svg {
    fill: none;
    stroke: #111;
}
svg text {
    stroke: none;
}
.defs {
    position: absolute;
    width: 0;
    height: 0;
}

/* main window */
.rhino {
    height: 100vh;
    display: flex;
    flex-direction: column;
}
.titlebar {
    height: 22px;
    background: #fff;
    display: flex;
    align-items: center;
    gap: 6px;
    padding: 0 2px;
    font-family: Roboto, sans-serif;
    color: #999;
}
.applogo {
    width: 16px;
    height: 16px;
}
.winbtns {
    margin-left: auto;
    display: flex;
}
.winbtns button {
    width: 46px;
    height: 22px;
    display: flex;
    align-items: center;
    justify-content: center;
}
.winbtns svg {
    width: 11px;
    height: 11px;
    stroke: #888;
}
.menu {
    height: 20px;
    background: #fff;
    display: flex;
    align-items: center;
    gap: 15px;
    padding-left: 7px;
    font-family: "Open Sans", sans-serif;
    font-size: 11px;
    color: #666;
}
.command {
    margin: 4px 1px 0 5px;
    border-left: 2px solid #c3c8d4;
    background: #fff;
}
.history {
    height: 37px;
    display: flex;
    justify-content: space-between;
    border-bottom: 1px solid #a0a5b0;
}
.history p {
    margin: 1px 0 0 1px;
    line-height: 15px;
}
.scroller {
    width: 16px;
    background: #f0f0f0;
    display: flex;
    flex-direction: column;
    justify-content: space-around;
    align-items: center;
}
.scroller svg {
    width: 8px;
    height: 5px;
    stroke: #555;
    stroke-width: 2;
}
.prompt {
    height: 18px;
    display: flex;
    align-items: center;
    padding-left: 1px;
    font-weight: bold;
}
.prompt input {
    flex: 1;
}
.toolpane {
    margin: 5px 0 0 5px;
    border-top: 1px solid #c5cad6;
    border-bottom: 1px solid #c5cad6;
    border-left: 2px solid #c3c8d4;
    padding-top: 3px;
}
.tabs {
    display: flex;
    height: 15px;
    border-bottom: 1px solid #a3abc0;
    font-size: 11px;
}
.tabs button {
    position: relative;
    isolation: isolate;
    padding: 0 12px 0 9px;
    margin-right: -4px;
    white-space: nowrap;
    background: #a3abc0;
    clip-path: polygon(12px 0, calc(100% - 3px) 0, 100% 3px, 100% 100%, 0 100%);
}
.tabs button::before {
    content: "";
    position: absolute;
    z-index: -1;
    inset: 1px 1px 0 1px;
    background: #d5daea;
    clip-path: polygon(12px 0, calc(100% - 3px) 0, 100% 3px, 100% 100%, 0 100%);
}
.tabs .active::before {
    background: #fff;
}
.toolbar {
    display: flex;
    height: 38px;
    align-items: flex-start;
    padding: 1px 0 0 1px;
    background: linear-gradient(#f8f8fa, #e0e3ea);
}
.second {
    margin: 3px 0 0 5px;
    border-left: 2px solid #c3c8d4;
    height: 36px;
    padding: 0;
    background: linear-gradient(#fff, #e0e3eb);
}
.tool {
    position: relative;
    width: 28px;
    height: 28px;
    display: flex;
    align-items: center;
    justify-content: center;
}
.tool svg {
    width: 24px;
    height: 24px;
}
.toolbar .tool svg, .sidebar .tool svg {
    width: 22px;
    height: 22px;
}
.fly::after {
    content: "";
    position: absolute;
    right: 1px;
    bottom: 1px;
    border: 3px solid transparent;
    border-right-color: #666;
    border-bottom-color: #666;
}
.sep {
    width: 2px;
    height: 24px;
    margin: 2px 2px;
    border-left: 1px solid #b4b8c2;
}

/* workspace */
.work {
    flex: 1;
    min-height: 0;
    display: flex;
}
.sidebar {
    width: 64px;
    padding: 8px 0 0 1px;
    display: grid;
    grid-template-columns: 28px 28px;
    grid-auto-rows: 28px;
    align-content: start;
    background: linear-gradient(#b8bfcc, #b8bfcc) 3px 3px / 55px 1px no-repeat, linear-gradient(#b8bfcc, #b8bfcc) 3px 5px / 55px 1px no-repeat, #e0e3eb;
}
.viewcol {
    flex: 1;
    display: flex;
    flex-direction: column;
}
.viewport {
    flex: 1;
    position: relative;
    background: #9ca3aa;
    border-top: 1px solid #a0a7b8;
    border-bottom: 1px solid #a0a7b8;
    overflow: hidden;
}
.vplabel {
    display: flex;
    align-items: center;
    gap: 7px;
    height: 18px;
    padding: 0 2px 0 9px;
    background: #8ea4c2;
    font-family: "Open Sans", sans-serif;
    font-size: 11px;
}
.vplabel i {
    height: 14px;
    padding-left: 2px;
    border-left: 1px solid #111;
}
.vplabel i::before {
    content: "";
    display: block;
    margin-top: 5px;
    border: 4px solid transparent;
    border-top-color: #111;
}
.scene {
    position: absolute;
    inset: 0;
    width: 100%;
    height: 100%;
    pointer-events: none;
}
.srf {
    fill: rgba(176, 52, 56, 0.56);
    stroke: #961a20;
}
.frame {
    stroke: #961a20;
}
.pts {
    stroke: #8b0008;
    stroke-width: 2;
}
.axes {
    stroke: #666;
}
.axes text {
    fill: #555;
    font: 13px "DejaVu Sans", sans-serif;
}
.vptabs {
    display: flex;
    height: 22px;
    padding: 1px 0 1px;
    font-family: "Open Sans", sans-serif;
    font-size: 11px;
}
.vptabs button {
    position: relative;
    isolation: isolate;
    padding: 0 8px 0 10px;
    background: #a3abc0;
    clip-path: polygon(0 0, 100% 0, 100% calc(100% - 3px), calc(100% - 3px) 100%, 8px 100%, 0 10px);
}
.vptabs button::before {
    content: "";
    position: absolute;
    z-index: -1;
    inset: 0 1px 1px 1px;
    background: #d5daea;
    clip-path: polygon(0 0, 100% 0, 100% calc(100% - 3px), calc(100% - 3px) 100%, 8px 100%, 0 10px);
}
.vptabs .active::before {
    background: #fff;
}
.vptabs .add::before {
    background: #e4e7ee;
}
.vptabs svg {
    width: 10px;
    height: 10px;
    margin: 0 1px;
}
.status {
    display: flex;
    height: 18px;
    border-top: 1px solid #a0a7b8;
}
.status > * {
    flex: none;
    border-right: 1px solid #a0a7b8;
    text-align: center;
    line-height: 18px;
    white-space: nowrap;
}
.status .on {
    background: #e2f1fb;
    font-weight: bold;
}
.status .layer {
    width: 173px;
    display: flex;
    align-items: center;
    gap: 3px;
    padding-left: 3px;
}
.layer i {
    width: 13px;
    height: 13px;
    background: #000;
}
.w46 { width: 46px; }
.w47 { width: 47px; }
.w54 { width: 54px; }
.w56 { width: 57px; }
.w66 { width: 66px; }
.w76 { width: 76px; }
.w85 { width: 85px; }
.w88 { width: 88px; }
.w109 { width: 109px; }
.status .tol {
    padding-left: 3px;
}
.taskbar {
    height: 2px;
    background: #1c1f1c;
}

/* grasshopper window */
.gh {
    position: absolute;
    top: 90px;
    left: 1203px;
    right: 0;
    bottom: 2px;
    display: flex;
    flex-direction: column;
    overflow: hidden;
    background: #f0f0f0;
    border-top: 1px solid #999;
    border-left: 1px solid #777;
    box-shadow: 0 0 14px rgba(0, 0, 0, 0.45);
}
.gh-title {
    flex: none;
    height: 30px;
    display: flex;
    align-items: center;
    background: #fff;
    padding-left: 8px;
    font-family: "Open Sans", sans-serif;
    font-size: 11px;
    color: #999;
}
.gh-title .winbtns {
    margin-right: -10px;
}
.gh-menu {
    flex: none;
    height: 24px;
    display: flex;
    align-items: center;
    gap: 18px;
    padding-left: 14px;
    background: linear-gradient(90deg, #f0f0f0, #fafafa);
    font-family: Roboto, sans-serif;
    font-size: 11px;
}
.gh-menu span {
    margin-left: auto;
}
.gh-tabs {
    flex: none;
    height: 23px;
    display: flex;
    border-bottom: 1px solid #888;
    font-family: "Open Sans", sans-serif;
    color: #888;
}
.gh-tabs button {
    flex: none;
    width: 28px;
}
.gh-tabs button:last-child {
    width: 24px;
}
.gh-tabs .active {
    height: 23px;
    background: #fff;
    color: #111;
    border: 1px solid #888;
    border-bottom: none;
    border-radius: 6px 6px 0 0;
}
.ribbon {
    flex: none;
    height: 200px;
    display: flex;
    align-items: flex-start;
    gap: 3px;
    padding: 2px;
    background: linear-gradient(#d2d2d2, #f2f2f2);
    border-bottom: 2px solid #777;
}
.panel {
    flex: none;
    border: 1px solid #888;
    border-radius: 4px;
    background: linear-gradient(#d6d6d6, #ececec);
    overflow: hidden;
    padding-top: 1px;
}
.panel svg {
    display: block;
    width: 24px;
    height: 24px;
    margin: 2px;
}
.panel .cols svg + svg {
    margin-top: 4px;
}
.cols {
    display: flex;
    padding: 0 2px 0 1px;
}
.split > div + div {
    margin-left: 4px;
    padding-left: 5px;
    border-left: 1px solid #bbb;
}
.panel h3 {
    height: 13px;
    margin: 0;
    background: #222;
    color: #eee;
    font: 10px/12px Roboto, sans-serif;
    text-align: center;
    white-space: nowrap;
    contain: inline-size;
}
.panel h3 span {
    color: #aaa;
}
.cap {
    font: bold 10px "Liberation Mono", monospace;
    fill: #111;
    text-anchor: middle;
}
.red {
    fill: #ee1c24;
}
.big {
    font: bold 15px "Liberation Serif", serif;
    fill: #fff;
    stroke: #222;
    stroke-width: 2;
    paint-order: stroke;
    text-anchor: middle;
}
.gh-bar {
    flex: none;
    height: 32px;
    display: flex;
    align-items: center;
    padding-left: 2px;
    background: linear-gradient(#fff, #efefef);
}
.gh-bar > .tool + .tool {
    margin-left: 3px;
}
.gh-bar .sep {
    margin: 0 4px;
}
.zoombox {
    position: relative;
    margin-right: 2px;
}
.zoombox select {
    appearance: none;
    display: block;
    width: 70px;
    height: 25px;
    border: 1px solid #777;
    background: #fff;
    padding-left: 3px;
    font-family: "Open Sans", sans-serif;
}
.zoombox svg {
    position: absolute;
    right: 5px;
    top: 11px;
    width: 8px;
    height: 5px;
    stroke: #555;
    pointer-events: none;
}
.drop {
    margin-right: 9px;
}
.drop::after {
    content: "";
    position: absolute;
    right: -7px;
    top: 13px;
    border: 3px solid transparent;
    border-top-color: #111;
}
.right {
    margin-left: auto;
    display: flex;
    align-items: center;
    margin-right: -6px;
}
.right .sep {
    margin: 0 2px;
}
.right .picked {
    border: 1px solid #3399ff;
    background: #eaf3fd;
}
.right .picked + .sep {
    margin: 0 7px;
}

/* definition canvas */
.canvas {
    flex: 1;
    position: relative;
    overflow: hidden;
    background:
        repeating-linear-gradient(90deg, rgba(0, 0, 0, 0.13) 0 1px, transparent 1px 188px) 31px 0,
        repeating-linear-gradient(rgba(0, 0, 0, 0.13) 0 1px, transparent 1px 63px, rgba(0, 0, 0, 0.13) 63px 64px, transparent 64px 125px) 0 -79px,
        repeating-linear-gradient(135deg, #d3cfc6 0 2px, #c9c5bc 2px 4px);
}
.wires {
    position: absolute;
    inset: 0;
    width: 100%;
    height: 100%;
}
.double {
    stroke: #575550;
    stroke-width: 7;
}
.light {
    stroke: #c4c1b8;
    stroke-width: 2;
}
.single {
    stroke: rgba(0, 0, 0, 0.6);
    stroke-width: 4;
}
.node {
    position: absolute;
    display: flex;
    align-items: center;
    border: 1px solid #444;
    border-radius: 4px;
    background: linear-gradient(#f8f8f8, #e2e2e2 18%, #c4c4c4);
    box-shadow: 0 2px 3px rgba(0, 0, 0, 0.3);
    font-family: "Open Sans", sans-serif;
    font-size: 12px;
}
.node > svg {
    width: 24px;
    height: 24px;
}
.node span {
    display: block;
    height: 25px;
    line-height: 24px;
    position: relative;
}
/* half round grips on the edges */
.ins span::before, .outs span::after {
    content: "";
    position: absolute;
    top: 6px;
    width: 6px;
    height: 12px;
    background: #fff;
    border: 2px solid #000;
}
.ins span::before {
    left: -6px;
    border-right: none;
    border-radius: 6px 0 0 6px;
}
.outs span::after {
    right: -6px;
    border-left: none;
    border-radius: 0 6px 6px 0;
}
.ins span {
    padding-left: 9px;
}
.outs {
    margin-left: auto;
}
.outs span {
    padding-right: 14px;
}
.ratio {
    left: 319px;
    top: 149px;
    width: 111px;
    height: 56px;
    border-color: #7a2a10;
    background: linear-gradient(#ffdcae, #ffc888 16%, #ffa331 18%, #ff9015);
}
.ratio > svg {
    margin-left: 9px;
}
.balloon {
    position: absolute;
    right: -1px;
    top: -16px;
    width: 18px;
    height: 15px;
    border: 1px solid #a87800;
    border-radius: 3px;
    background: linear-gradient(#fdf0b0, #f0b020 60%, #ffc020);
}
.balloon::after {
    content: "";
    position: absolute;
    left: 5px;
    top: 13px;
    border: 3px solid transparent;
    border-top-color: #d89a10;
}
.merge {
    left: 149px;
    top: 499px;
    width: 120px;
    height: 106px;
}
.merge > svg {
    margin-left: 10px;
}
.join {
    left: 403px;
    top: 528px;
    width: 157px;
    height: 56px;
}
.join > svg {
    margin-left: 9px;
}
.join .ins, .list .ins {
    text-align: right;
}
.list {
    left: 422px;
    top: 643px;
    width: 101px;
    height: 56px;
}
.list > svg {
    margin: 20px 0 0 9px;
}
.ghpanel {
    position: absolute;
    left: 395px;
    top: 338px;
    right: -20px;
    border: 1px solid #444;
    border-radius: 4px;
    padding: 23px 0 1px 1px;
    background: #d8d24c;
}
.ghpanel::before {
    content: "";
    position: absolute;
    left: -7px;
    top: 56px;
    width: 6px;
    height: 12px;
    border: 2px solid #000;
    border-right: none;
    border-radius: 6px 0 0 6px;
    background: #fff;
}
.ghpanel ol {
    margin: 0;
    padding: 0;
    list-style: none;
    font: 14px/19px "Liberation Mono", monospace;
    color: #444;
}
.ghpanel li {
    height: 20px;
    background: #fff85a;
}
.ghpanel li:nth-child(even) {
    background: #f4ee58;
}
.ghpanel b {
    display: inline-block;
    width: 16px;
    margin-right: 3px;
    padding-left: 4px;
    border-right: 1px solid #c9c33c;
    font-weight: normal;
}
.compass {
    position: absolute;
    left: 669px;
    top: 591px;
    width: 46px;
    height: 46px;
}
```
